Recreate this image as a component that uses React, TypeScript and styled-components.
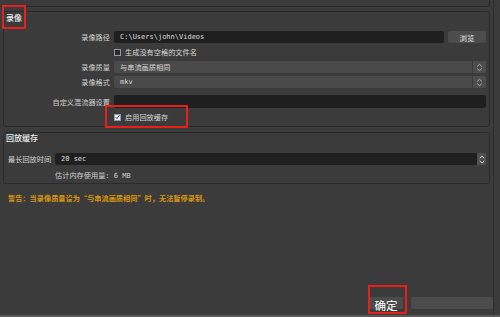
import styled, { createGlobalStyle } from 'styled-components';

const GlobalStyle = createGlobalStyle`
  html, body {
    margin: 0;
    padding: 0;
    background: #3b3b3b;
    overflow: hidden;
  }
  * {
    box-sizing: border-box;
  }
`;

const cjk = `"Noto Sans CJK SC", "Noto Sans", sans-serif`;
const mono = `"DejaVu Sans Mono", "Liberation Mono", "Noto Sans CJK SC", monospace`;

const Screen = styled.div`
  position: relative;
  width: 500px;
  height: 317px;
  background: #3b3b3b;
  border-bottom: 2px solid #5a5a5a;
  font-family: ${cjk};
  color: #d2d2d2;
`;

const Page = styled.div`
  width: 494px;
  height: 315px;
  border-right: 1px solid #2c2c2c;
  display: flex;
  flex-direction: column;
`;

const TopStub = styled.div`
  height: 7px;
  margin: 0 3px 0 0;
  border: 1px solid #2a2a2a;
  border-top: none;
  border-left: none;
  border-bottom-right-radius: 3px;
`;

const GroupBox = styled.section<{ $mt: number; $h: number }>`
  margin: ${(p) => p.$mt}px 3px 0 3px;
  height: ${(p) => p.$h}px;
  border: 1px solid #2a2a2a;
  border-radius: 3px;
  padding: 0 3px 0 0;
  display: flex;
  flex-direction: column;
`;

const Title = styled.div<{ $mt: number }>`
  margin: ${(p) => p.$mt}px 0 0 2px;
  height: 10px;
  line-height: 10px;
  font-size: 8px;
  font-weight: 500;
  color: #ececec;
`;

const FormRow = styled.div<{ $mt: number; $h: number }>`
  display: grid;
  grid-template-columns: 106px 1fr;
  column-gap: 4px;
  align-items: center;
  margin-top: ${(p) => p.$mt}px;
  height: ${(p) => p.$h}px;
`;

const Label = styled.div`
  text-align: right;
  font-size: 7.2px;
  line-height: 10px;
  white-space: nowrap;
  color: #cfcfcf;
`;

const Field = styled.div`
  display: flex;
  gap: 4px;
  height: 100%;
  min-width: 0;
`;

const TextInput = styled.div`
  flex: 1;
  height: 100%;
  background: #1f1f1f;
  border-radius: 2px;
  padding-left: 6px;
  display: flex;
  align-items: center;
  font-family: ${mono};
  font-size: 7px;
  color: #dcdcdc;
  white-space: nowrap;
`;

const Button = styled.div<{ $w: number }>`
  width: ${(p) => p.$w}px;
  height: 100%;
  background: #4c4c4c;
  border-radius: 2px;
  display: flex;
  align-items: center;
  justify-content: center;
  font-size: 7.4px;
  color: #e4e4e4;
`;

const Combo = styled.div`
  flex: 1;
  height: 100%;
  display: flex;
  background: #4a4a4a;
  border-radius: 2px;
  overflow: hidden;
`;

const ComboText = styled.div<{ $mono?: boolean }>`
  flex: 1;
  padding-left: 6px;
  display: flex;
  align-items: center;
  font-family: ${(p) => (p.$mono ? mono : cjk)};
  font-size: ${(p) => (p.$mono ? '7px' : '7.2px')};
  color: #dadada;
  border-right: 1px solid #3a3a3a;
`;

const Arrows = styled.div`
  width: 13px;
  display: flex;
  align-items: center;
  justify-content: center;
  background: #4d4d4d;
`;

const CheckLine = styled.div`
  display: flex;
  align-items: center;
  gap: 4px;
  font-size: 7.2px;
  line-height: 10px;
  color: #d6d6d6;
`;

const Box = styled.div<{ $checked?: boolean }>`
  width: 7px;
  height: 7px;
  border: 1px solid #9a9a9a;
  background: ${(p) => (p.$checked ? '#e8e8ee' : '#2a2a2a')};
  display: flex;
  align-items: center;
  justify-content: center;
`;

const SpinRow = styled.div`
  display: flex;
  align-items: center;
  margin-top: 10px;
  height: 12px;
`;

const SpinLabel = styled.div`
  width: 51px;
  padding-left: 4px;
  font-size: 7.2px;
  line-height: 10px;
  white-space: nowrap;
  color: #d2d2d2;
`;

const SpinField = styled.div`
  flex: 1;
  height: 100%;
  display: flex;
  border-radius: 2px;
  overflow: hidden;
`;

const SpinInput = styled(TextInput)`
  border-radius: 0;
`;

const SpinButtons = styled.div`
  width: 9px;
  display: flex;
  flex-direction: column;
  align-items: center;
  justify-content: center;
  background: #505050;
  gap: 1px;
`;

const Note = styled.div`
  margin: 5px 0 0 51px;
  font-size: 7.2px;
  line-height: 10px;
  color: #cfcfcf;
`;

const NoteMono = styled.span`
  font-family: ${mono};
  font-size: 7px;
`;

const Warning = styled.div`
  margin: 9px 0 0 8px;
  font-size: 7.2px;
  font-weight: 700;
  line-height: 10px;
  color: #d9950d;
  white-space: nowrap;
`;

const ButtonBar = styled.div`
  margin-top: auto;
  padding-bottom: 6px;
  display: flex;
  justify-content: flex-end;
  gap: 8px;
`;

const DialogButton = styled.div<{ $w: number }>`
  width: ${(p) => p.$w}px;
  height: 12px;
  background: #4b4b4b;
  border-radius: 2px;
  display: flex;
  justify-content: center;
  align-items: flex-start;
  padding-top: 2px;
  font-size: 11.5px;
  line-height: 12px;
  color: #ffffff;
  overflow: visible;
  white-space: nowrap;
`;

const Highlight = styled.div<{ $x: number; $y: number; $w: number; $h: number }>`
  position: absolute;
  left: ${(p) => p.$x}px;
  top: ${(p) => p.$y}px;
  width: ${(p) => p.$w}px;
  height: ${(p) => p.$h}px;
  border: 2px solid #e8201c;
  pointer-events: none;
`;

const UpDown = () => (
  <svg width="7" height="9" viewBox="0 0 7 9">
    <path d="M1.2 3.4 L3.5 1.3 L5.8 3.4" fill="none" stroke="#b8b8b8" strokeWidth="0.9" />
    <path d="M1.2 5.6 L3.5 7.7 L5.8 5.6" fill="none" stroke="#b8b8b8" strokeWidth="0.9" />
  </svg>
);

const Chevron = ({ up }: { up?: boolean }) => (
  <svg width="6" height="4" viewBox="0 0 6 4">
    <path
      d={up ? 'M0.8 3.3 L3 1 L5.2 3.3' : 'M0.8 0.8 L3 3 L5.2 0.8'}
      fill="none"
      stroke="#d0d0d0"
      strokeWidth="1"
    />
  </svg>
);

const Tick = () => (
  <svg width="6" height="6" viewBox="0 0 6 6">
    <path d="M0.8 3.2 L2.4 4.9 L5.3 0.8" fill="none" stroke="#2a4a9a" strokeWidth="1.2" />
  </svg>
);

const App = () => {
  return (
    <Screen>
      <GlobalStyle />
      <Page>
        <TopStub />
        <GroupBox $mt={4} $h={116}>
          <Title $mt={1}>录像</Title>
          <FormRow $mt={8} $h={12}>
            <Label>录像路径</Label>
            <Field>
              <TextInput>C:\Users\john\Videos</TextInput>
              <Button $w={38}>浏览</Button>
            </Field>
          </FormRow>
          <FormRow $mt={4} $h={10}>
            <div />
            <CheckLine>
              <Box />
              生成没有空格的文件名
            </CheckLine>
          </FormRow>
          <FormRow $mt={4} $h={12}>
            <Label>录像质量</Label>
            <Field>
              <Combo>
                <ComboText>与串流画质相同</ComboText>
                <Arrows>
                  <UpDown />
                </Arrows>
              </Combo>
            </Field>
          </FormRow>
          <FormRow $mt={3} $h={12}>
            <Label>录像格式</Label>
            <Field>
              <Combo>
                <ComboText $mono>mkv</ComboText>
                <Arrows>
                  <UpDown />
                </Arrows>
              </Combo>
            </Field>
          </FormRow>
          <FormRow $mt={7} $h={13}>
            <Label>自定义混流器设置</Label>
            <Field>
              <TextInput />
            </Field>
          </FormRow>
          <FormRow $mt={4} $h={10}>
            <div />
            <CheckLine>
              <Box $checked>
                <Tick />
              </Box>
              启用回放缓存
            </CheckLine>
          </FormRow>
        </GroupBox>

        <GroupBox $mt={5} $h={52}>
          <Title $mt={0}>回放缓存</Title>
          <SpinRow>
            <SpinLabel>最长回放时间</SpinLabel>
            <SpinField>
              <SpinInput>20 sec</SpinInput>
              <SpinButtons>
                <Chevron up />
                <Chevron />
              </SpinButtons>
            </SpinField>
          </SpinRow>
          <Note>
            估计内存使用量<NoteMono>: 6 MB</NoteMono>
          </Note>
        </GroupBox>

        <Warning>警告：当录像质量设为“与串流画质相同”时，无法暂停录制。</Warning>

        <ButtonBar>
          <DialogButton $w={34}>确定</DialogButton>
          <DialogButton $w={82} />
        </ButtonBar>
      </Page>

      <Highlight $x={2} $y={5} $w={24} $h={24} />
      <Highlight $x={105} $y={105} $w={83} $h={23} />
      <Highlight $x={368} $y={285} $w={39} $h={29} />
    </Screen>
  );
};

export default App;
